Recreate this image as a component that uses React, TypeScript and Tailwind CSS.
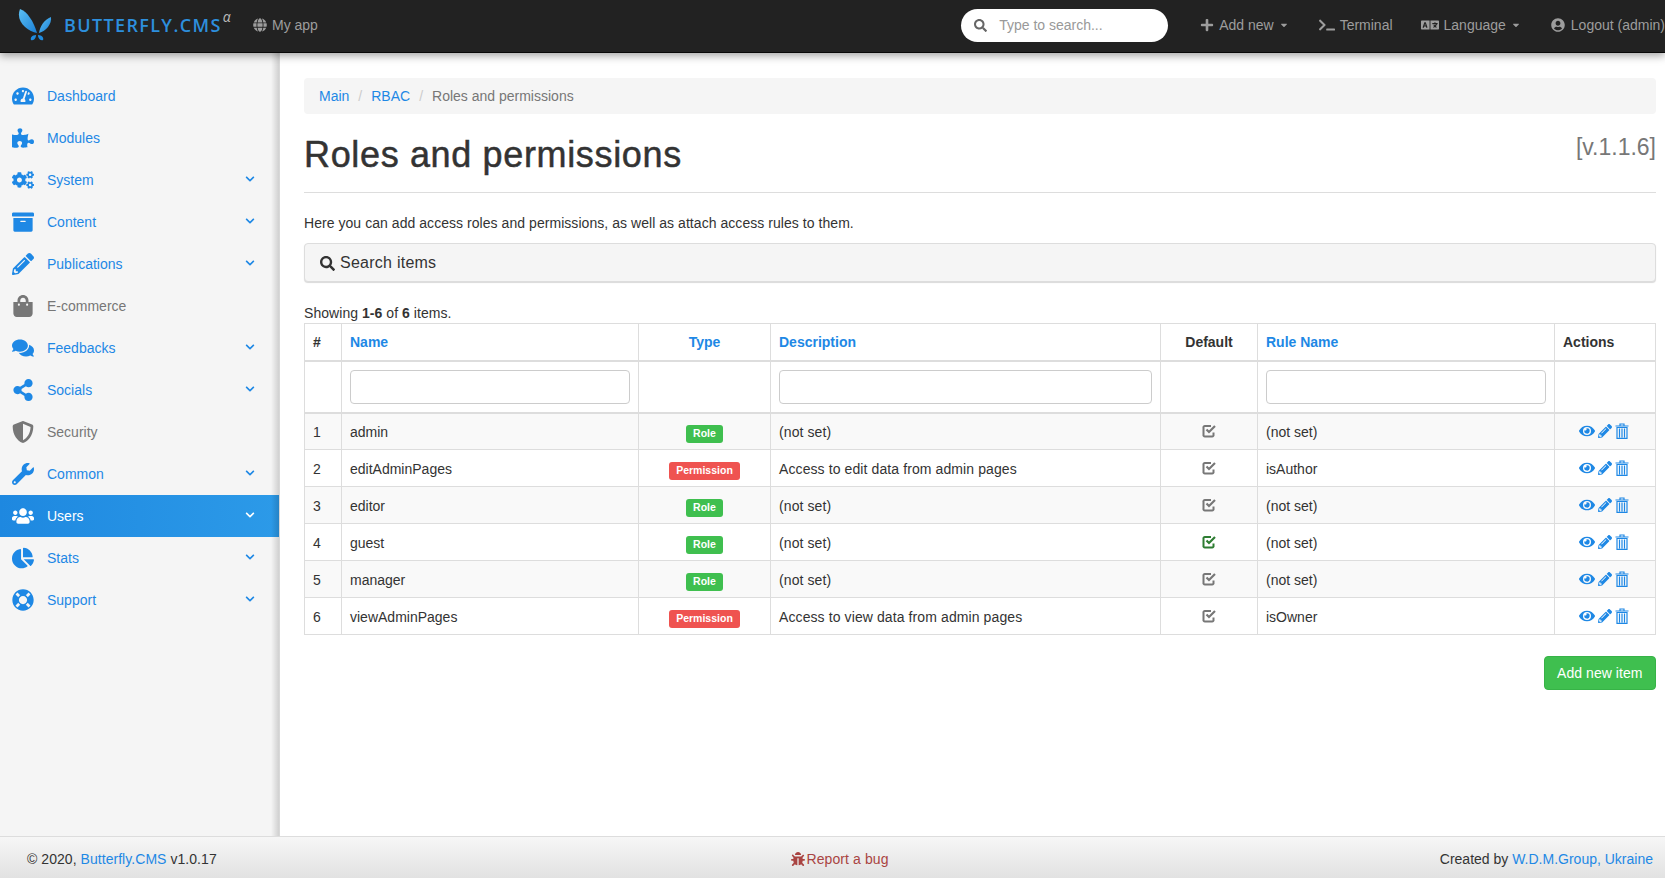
import React from 'react';
import {
  FaTachometerAlt, FaPuzzlePiece, FaCogs, FaArchive, FaPencilAlt, FaShoppingBag, FaComments,
  FaShareAlt, FaShieldAlt, FaWrench, FaUsers, FaChartPie, FaLifeRing, FaChevronDown, FaGlobe,
  FaSearch, FaPlus, FaTerminal, FaLanguage, FaUserCircle, FaEye, FaBug, FaCaretDown,
} from 'react-icons/fa';

const menu = [
  { label: 'Dashboard', icon: FaTachometerAlt, sub: false },
  { label: 'Modules', icon: FaPuzzlePiece, sub: false },
  { label: 'System', icon: FaCogs, sub: true },
  { label: 'Content', icon: FaArchive, sub: true },
  { label: 'Publications', icon: FaPencilAlt, sub: true },
  { label: 'E-commerce', icon: FaShoppingBag, sub: false, muted: true },
  { label: 'Feedbacks', icon: FaComments, sub: true },
  { label: 'Socials', icon: FaShareAlt, sub: true },
  { label: 'Security', icon: FaShieldAlt, sub: false, muted: true },
  { label: 'Common', icon: FaWrench, sub: true },
  { label: 'Users', icon: FaUsers, sub: true, active: true },
  { label: 'Stats', icon: FaChartPie, sub: true },
  { label: 'Support', icon: FaLifeRing, sub: true },
];

const rows = [
  { id: 1, name: 'admin', type: 'Role', desc: '(not set)', rule: '(not set)' },
  { id: 2, name: 'editAdminPages', type: 'Permission', desc: 'Access to edit data from admin pages', rule: 'isAuthor' },
  { id: 3, name: 'editor', type: 'Role', desc: '(not set)', rule: '(not set)' },
  { id: 4, name: 'guest', type: 'Role', desc: '(not set)', rule: '(not set)', isDefault: true },
  { id: 5, name: 'manager', type: 'Role', desc: '(not set)', rule: '(not set)' },
  { id: 6, name: 'viewAdminPages', type: 'Permission', desc: 'Access to view data from admin pages', rule: 'isOwner' },
];

const Logo = () => (
  <svg width="34" height="32" viewBox="0 0 34 32" className="shrink-0">
    <defs>
      <linearGradient id="wing" x1="0" y1="0" x2="1" y2="1">
        <stop offset="0" stopColor="#5cc0f4" />
        <stop offset="1" stopColor="#1a7fd6" />
      </linearGradient>
    </defs>
    <path d="M2 0 C9 2 16 13 19 24 C10 22 -3 13 2 0 Z" fill="url(#wing)" />
    <path d="M33 8 C34 15 28 22 21 24 C22 17 26 11 33 8 Z" fill="url(#wing)" />
    <path d="M18 26 C14 26 12 29 13 31 C16 32 18 29 18 26 Z" fill="#1f8be0" />
    <path d="M20 26 C24 26 26 29 25 31 C22 32 20 29 20 26 Z" fill="#1f8be0" />
  </svg>
);

const CheckIcon = ({ className }: { className: string }) => (
  <svg width="15" height="14" viewBox="0 0 15 14" fill="none" className={className}>
    <path d="M11.5 8.5 V10.5 A1.5 1.5 0 0 1 10 12.5 H3 A1.5 1.5 0 0 1 1.5 10.5 V4 A1.5 1.5 0 0 1 3 2 H9" stroke="currentColor" strokeWidth="2" />
    <path d="M4.5 5.5 L7 8 L13 2" stroke="currentColor" strokeWidth="2.2" />
  </svg>
);

const TrashIcon = () => (
  <svg width="14" height="16" viewBox="0 0 14 16" fill="none" stroke="#1e88e5" strokeWidth="1.2">
    <path d="M0.5 3 H13.5 M5 3 V1 H9 V3" />
    <path d="M2 4.5 H12 V15.3 H2 Z M4.5 5.5 V14.5 M7 5.5 V14.5 M9.5 5.5 V14.5" />
  </svg>
);

const NavLink = ({ icon: Icon, label, caret, size = 14, gap = 'gap-[5px]' }: { icon: React.ElementType; label: string; caret?: boolean; size?: number; gap?: string }) => (
  <a className={`flex items-center ${gap} text-[#9d9d9d]`}>
    <Icon size={size} />
    <span>{label}</span>
    {caret && <FaCaretDown size={10} />}
  </a>
);

export default function App() {
  return (
    <div className="h-screen w-full flex flex-col overflow-hidden bg-white text-[14px] text-[#333] font-['Liberation_Sans',Arial,sans-serif]">
      <header className="relative z-10 h-[53px] shrink-0 flex items-center pb-[2px] bg-[#222] border-b border-[#080808] shadow-[0_3px_8px_rgba(0,0,0,0.35)]">
        <div className="flex items-center pl-[18px] w-[238px]">
          <Logo />
          <span className="ml-[12px] flex font-['Open_Sans',sans-serif] text-[18px] font-semibold tracking-[1.36px] text-[#2d8fdd] whitespace-nowrap">
            BUTTERFLY.CMS<span className="-mt-[2px] ml-[1px] text-[14px] leading-[14px] font-normal text-[#bbb] italic">α</span>
          </span>
        </div>
        <div className="ml-[15px]">
          <NavLink icon={FaGlobe} label="My app" />
        </div>
        <div className="ml-auto flex items-center whitespace-nowrap">
          <div className="flex items-center w-[207px] h-[33px] rounded-full bg-white pl-[13px] text-[#999]">
            <FaSearch size={13} className="text-[#666]" />
            <span className="ml-[12px]">Type to search...</span>
          </div>
          <div className="ml-[32px]"><NavLink icon={FaPlus} label="Add new" caret /></div>
          <div className="ml-[30px]"><NavLink icon={FaTerminal} label="Terminal" size={16} /></div>
          <div className="ml-[28px]"><NavLink icon={FaLanguage} label="Language" size={18} caret /></div>
          <div className="ml-[30px]"><NavLink icon={FaUserCircle} label="Logout (admin)" gap="gap-[6px]" /></div>
        </div>
      </header>

      <div className="flex-1 flex min-h-0">
        <aside className="relative w-[280px] shrink-0 bg-[#f5f5f5] border-r border-[#d8d8d8] pt-[22px]">
          {menu.map((m) => (
            <a
              key={m.label}
              className={`flex items-center h-[42px] pl-[12px] pr-[22px] ${
                m.active
                  ? 'bg-gradient-to-r from-[#1e88e0] to-[#2c9ae8] text-white'
                  : m.muted
                  ? 'text-[#777]'
                  : 'text-[#1e88e5]'
              }`}
            >
              <span className="w-[35px] flex justify-start">
                <m.icon size={22} />
              </span>
              <span className="flex-1">{m.label}</span>
              {m.sub && <FaChevronDown size={10} className="-mt-[3px] mr-[2px]" />}
            </a>
          ))}
          <div className="absolute top-0 bottom-0 right-0 w-[8px] bg-gradient-to-r from-transparent to-black/15" />
        </aside>

        <main className="flex-1 min-w-0 pl-[24px] pr-[9px] pt-[25px]">
          <ol className="flex items-center h-[36px] px-[15px] rounded bg-[#f5f5f5]">
            <li className="text-[#1e88e5]">Main</li>
            <li className="px-[9px] text-[#ccc]">/</li>
            <li className="text-[#1e88e5]">RBAC</li>
            <li className="px-[9px] text-[#ccc]">/</li>
            <li className="text-[#777]">Roles and permissions</li>
          </ol>

          <div className="flex justify-between mt-[20px] pb-[16px] border-b border-[#ddd]">
            <h1 className="text-[36px] leading-[42px] font-medium tracking-[0.65px] text-[#333] [-webkit-text-stroke:0.5px_#333]">Roles and permissions</h1>
            <span className="text-[23px] leading-[26px] text-[#777]">[v.1.1.6]</span>
          </div>

          <p className="mt-[20px] leading-[20px] tracking-[0.05px]">
            Here you can add access roles and permissions, as well as attach access rules to them.
          </p>

          <div className="flex items-center gap-[5px] mt-[10px] h-[39px] pt-[1px] px-[15px] rounded bg-[#f5f5f5] border border-[#ddd] shadow-[0_1px_1px_rgba(0,0,0,0.15)] text-[16px] tracking-[0.25px]">
            <FaSearch size={15} />
            <span>Search items</span>
          </div>

          <div className="mt-[21px] leading-[20px] tracking-[0.05px]">
            Showing <b>1-6</b> of <b>6</b> items.
          </div>

          <table className="w-full table-fixed border-collapse border border-[#ddd]">
            <colgroup>
              <col className="w-[37px]" />
              <col className="w-[297px]" />
              <col className="w-[132px]" />
              <col className="w-[390px]" />
              <col className="w-[97px]" />
              <col className="w-[297px]" />
              <col />
            </colgroup>
            <thead>
              <tr className="h-[37px] font-bold">
                <th className="border border-b-2 border-[#ddd] px-[8px] pt-[2px] text-left">#</th>
                <th className="border border-b-2 border-[#ddd] px-[8px] pt-[2px] text-left text-[#1e88e5]">Name</th>
                <th className="border border-b-2 border-[#ddd] px-[8px] pt-[2px] text-center text-[#1e88e5]">Type</th>
                <th className="border border-b-2 border-[#ddd] px-[8px] pt-[2px] text-left text-[#1e88e5]">Description</th>
                <th className="border border-b-2 border-[#ddd] px-[8px] pt-[2px] text-center">Default</th>
                <th className="border border-b-2 border-[#ddd] px-[8px] pt-[2px] text-left text-[#1e88e5]">Rule Name</th>
                <th className="border border-b-2 border-[#ddd] px-[8px] pt-[2px] text-left">Actions</th>
              </tr>
              <tr className="h-[52px]">
                <td className="border border-b-2 border-[#ddd]" />
                <td className="border border-b-2 border-[#ddd] px-[8px]">
                  <input className="block w-full h-[34px] rounded border border-[#ccc] bg-white" />
                </td>
                <td className="border border-b-2 border-[#ddd]" />
                <td className="border border-b-2 border-[#ddd] px-[8px]">
                  <input className="block w-full h-[34px] rounded border border-[#ccc] bg-white" />
                </td>
                <td className="border border-b-2 border-[#ddd]" />
                <td className="border border-b-2 border-[#ddd] px-[8px]">
                  <input className="block w-full h-[34px] rounded border border-[#ccc] bg-white" />
                </td>
                <td className="border border-b-2 border-[#ddd]" />
              </tr>
            </thead>
            <tbody>
              {rows.map((r) => (
                <tr key={r.id} className={`h-[37px] ${r.id % 2 === 1 ? 'bg-[#f9f9f9]' : ''}`}>
                  <td className="border border-[#ddd] px-[8px] pt-[2px]">{r.id}</td>
                  <td className="border border-[#ddd] px-[8px] pt-[2px]">{r.name}</td>
                  <td className="border border-[#ddd] px-[8px] pt-[2px] text-center">
                    <span
                      className={`inline-block mt-[2px] rounded-[3px] px-[7px] pt-[3px] pb-[4px] text-[10.5px] leading-[11px] font-bold text-white align-middle ${
                        r.type === 'Role' ? 'bg-[#3fbf4f]' : 'bg-[#ef5350]'
                      }`}
                    >
                      {r.type}
                    </span>
                  </td>
                  <td className="border border-[#ddd] px-[8px] pt-[2px] tracking-[0.1px]">{r.desc}</td>
                  <td className="border border-[#ddd] px-[8px] pt-[2px]">
                    <CheckIcon className={`mx-auto -mt-[2px] ${r.isDefault ? 'text-[#2e7d32]' : 'text-[#777]'}`} />
                  </td>
                  <td className="border border-[#ddd] px-[8px] pt-[2px]">{r.rule}</td>
                  <td className="border border-[#ddd] px-[8px] pt-[2px]">
                    <div className="flex items-center justify-center gap-[3px] -mt-[3px] pr-[2px]">
                      <FaEye size={16} className="text-[#1e88e5]" />
                      <FaPencilAlt size={14} className="text-[#1e88e5]" />
                      <TrashIcon />
                    </div>
                  </td>
                </tr>
              ))}
            </tbody>
          </table>

          <div className="flex justify-end mt-[21px]">
            <button className="h-[34px] px-[12.5px] rounded bg-[#3fbf4f] border border-[#37b347] text-white tracking-[0.05px]">Add new item</button>
          </div>
        </main>
      </div>

      <footer className="h-[42px] shrink-0 grid grid-cols-3 items-center pl-[27px] pr-[12px] pt-[3px] bg-gradient-to-b from-[#f6f6f6] to-[#e2e2e2] border-t border-[#ddd]">
        <div className="tracking-[0.05px]">
          © 2020, <a className="text-[#1e88e5]">Butterfly.CMS</a> v1.0.17
        </div>
        <div className="flex items-center justify-center gap-[1px] text-[#a94442] tracking-[0.1px]">
          <FaBug size={14} />
          <span>Report a bug</span>
        </div>
        <div className="text-right">
          Created by <a className="text-[#1e88e5]">W.D.M.Group, Ukraine</a>
        </div>
      </footer>
    </div>
  );
}
